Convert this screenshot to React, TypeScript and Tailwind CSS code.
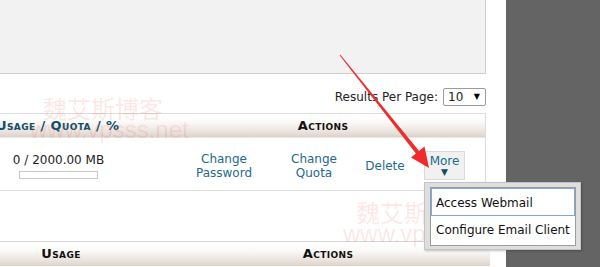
import React from 'react';

const font = { fontFamily: '"DejaVu Sans", Verdana, sans-serif' };

const headerBg = 'bg-[linear-gradient(to_bottom,#ffffff_0%,#fbfaf9_35%,#e9e1db_80%,#ddd2ca_100%)]';

const Arrow: React.FC = () => (
  <svg className="absolute left-0 top-0 pointer-events-none" width="600" height="267" viewBox="0 0 600 267">
    <polygon points="339.6,55.3 340.4,54.7 419.5,151.6 416.3,154.1" fill="#ef2b2b" />
    <polygon points="429,168 424.5,146.5 411,157.5" fill="#ef2b2b" />
  </svg>
);

const Watermark: React.FC<{ className: string }> = ({ className }) => (
  <div className={`absolute pointer-events-none leading-none text-[rgba(235,60,60,0.13)] ${className}`}>
    <div className="text-[24px] ml-[13px]" style={{ fontFamily: '"Noto Sans CJK SC", sans-serif' }}>魏艾斯博客</div>
    <div className="text-[24px] -mt-[2px]" style={{ fontFamily: '"Liberation Sans", Arial, sans-serif' }}>www.vpsss.net</div>
  </div>
);

export default function App() {
  return (
    <div className="relative flex w-[600px] h-[267px] overflow-hidden bg-white text-[12px] text-[#222]" style={font}>
      <div className="w-[506px] shrink-0 flex flex-col">
        <div className="w-[486px] h-[74px] bg-[#f2f2f2] border-r border-b border-[#cfcfcf]" />

        <div className="w-[486px] h-[39px] flex items-center justify-end pt-[6px]">
          <span className="text-[12px] text-[#222] mr-[5px]">Results Per Page:</span>
          <div className="w-[43px] h-[18px] border border-[#9a9a9a] rounded-[2px] bg-white flex items-center justify-between pl-[4px] pr-[5px]">
            <span className="text-[12px]">10</span>
            <span className="text-[8px] text-black">▼</span>
          </div>
        </div>

        <div className="w-[486px] border-t border-r border-b border-[#dcdcdc]">
          <div className={`h-[23px] flex items-center ${headerBg} font-bold text-[13px] tracking-[0.4px] [font-variant:small-caps]`}>
            <div className="w-[161px] -ml-[4px] text-[#0d4f6b]">Usage / Quota / %</div>
            <div className="flex-1 text-center text-[#111] pl-[4px]">Actions</div>
          </div>
          <div className="h-[53px] flex items-center border-t border-[#e6e6e6]">
            <div className="w-[117px] flex flex-col items-center pt-[4px]">
              <span className="leading-[14px]">0 / 2000.00 MB</span>
              <div className="mt-[4px] w-[79px] h-[8px] border border-[#c8c8c8] bg-white" />
            </div>
            <div className="w-[44px]" />
            <div className="flex-1 flex items-center text-[#246a8b]">
              <div className="ml-[23px] w-[80px] text-center leading-[14px] pt-[3px]">Change<br />Password</div>
              <div className="ml-[20px] w-[60px] text-center leading-[14px] pt-[3px]">Change<br />Quota</div>
              <div className="ml-[16px] w-[50px] text-center pt-[3px]">Delete</div>
              <div className="ml-[14px] w-[41px] h-[29px] mt-[3px] bg-[#f1f1f1] border border-[#dadada] flex flex-col items-center justify-center leading-[12px]">
                <span className="text-[#246a8b]">More</span>
                <span className="text-[9px] text-[#0f4c63] leading-[10px]">▼</span>
              </div>
            </div>
          </div>
        </div>

        <div className="h-[50px]" />

        <div className="w-[490px] border-t border-[#d6d6d6]">
          <div className={`h-[24px] flex items-center ${headerBg} font-bold text-[13px] tracking-[0.4px] [font-variant:small-caps] text-[#111]`}>
            <div className="w-[122px] text-center">Usage</div>
            <div className="flex-1 text-center pl-[44px]">Actions</div>
          </div>
        </div>
      </div>

      <div className="flex-1 bg-[#646464]" />

      <Watermark className="left-[30px] top-[96px]" />
      <Watermark className="left-[343px] top-[200px]" />

      <div className="absolute left-[424px] top-[182px] w-[157px] h-[68px] bg-[#dedede] border border-[#c4c4c4] shadow-[1px_1px_2px_rgba(0,0,0,0.25)] p-[4px_4px_3px_5px]">
        <div className="h-full bg-white border border-[#9c9c9c] flex flex-col">
          <div className="h-[28px] border border-[#7fa9e3] flex items-center pl-[4px] pt-[1px] text-[#111]">Access Webmail</div>
          <div className="h-[27px] flex items-center pl-[5px] text-[#111]">Configure Email Client</div>
        </div>
      </div>

      <Arrow />
    </div>
  );
}
